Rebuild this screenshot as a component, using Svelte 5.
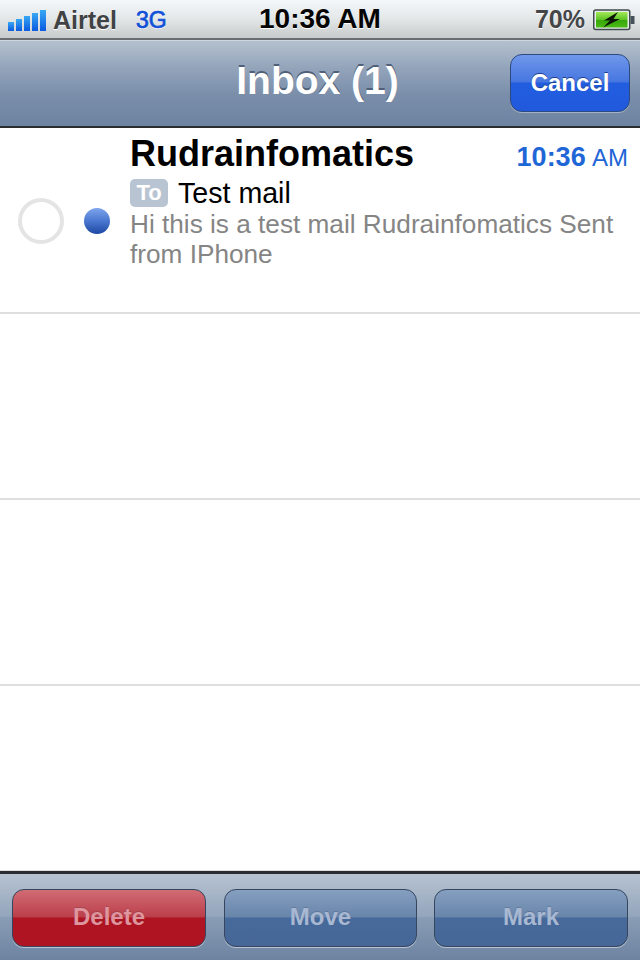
<script>
	const rows = [1, 2, 3, 4];
	const signal = [9, 12, 15, 18, 21];
</script>

<div class="phone">
	<div class="status">
		<div class="left">
			<div class="bars">
				{#each signal as h}
					<span style="height: {h}px"></span>
				{/each}
			</div>
			<span class="carrier">Airtel</span>
			<span class="net">3G</span>
		</div>
		<span class="clock">10:36 AM</span>
		<div class="right">
			<span class="pct">70%</span>
			<svg class="battery" width="42" height="22" viewBox="0 0 42 22">
				<defs>
					<linearGradient id="charge" x1="0" y1="0" x2="0" y2="1">
						<stop offset="0" stop-color="#a2e85a" />
						<stop offset="0.5" stop-color="#5cc422" />
						<stop offset="0.55" stop-color="#38a80c" />
						<stop offset="1" stop-color="#4aba14" />
					</linearGradient>
				</defs>
				<rect x="0.75" y="1" width="36" height="19.5" rx="2" fill="#e8ecec" stroke="#3f4a4c" stroke-width="1.5" />
				<rect x="3" y="3" width="31.5" height="15.5" fill="url(#charge)" />
				<rect x="37.5" y="7" width="4" height="8" fill="#46525a" />
				<path d="M25 3 L11 11.5 L17 11.5 L10 18.5 L27 10 L20.5 10 L25 3 Z" fill="#0c1405" />
			</svg>
		</div>
	</div>

	<header class="nav">
		<h1>Inbox (1)</h1>
		<button class="cancel">Cancel</button>
	</header>

	<main class="list">
		<article class="row mail">
			<span class="check"></span>
			<span class="dot"></span>
			<div class="body">
				<div class="top">
					<strong>Rudrainfomatics</strong>
					<time><b>10:36</b> AM</time>
				</div>
				<div class="subject"><span class="to">To</span>Test mail</div>
				<p>Hi this is a test mail Rudrainfomatics Sent from IPhone</p>
			</div>
		</article>
		{#each rows.slice(1) as r (r)}
			<div class="row"></div>
		{/each}
	</main>

	<footer class="toolbar">
		<button class="act delete">Delete</button>
		<button class="act move">Move</button>
		<button class="act mark">Mark</button>
	</footer>
</div>

<style>
	:global(body) {
		margin: 0;
		background: #fff;
	}

	.phone {
		width: 640px;
		height: 960px;
		display: flex;
		flex-direction: column;
		overflow: hidden;
		font-family: "Liberation Sans", Arial, sans-serif;
	}

	.status {
		height: 40px;
		flex: none;
		position: relative;
		display: flex;
		align-items: center;
		justify-content: space-between;
		padding: 0 0 0 8px;
		box-sizing: border-box;
		background: linear-gradient(#f3f7f9, #e6e9ea 45%, #c8cbcc);
		border-bottom: 2px solid #6a6e72;
	}

	.left {
		display: flex;
		align-items: center;
		padding-top: 2px;
	}

	.bars {
		display: flex;
		align-items: flex-end;
		gap: 2px;
		height: 22px;
		margin-top: -1px;
	}

	.bars span {
		width: 6px;
		background: linear-gradient(#38a8f4, #0a5ae0);
	}

	.carrier {
		font-size: 25px;
		font-weight: 700;
		color: #404244;
		margin-left: 7px;
		text-shadow: 0 1px 0 #fff;
	}

	.net {
		font-size: 23px;
		font-weight: 400;
		color: #1050d8;
		margin-left: 19px;
		-webkit-text-stroke: 0.7px #1050d8;
		text-shadow: 0 1px 0 #fff;
	}

	.clock {
		position: absolute;
		left: 259px;
		top: 3px;
		font-size: 28px;
		font-weight: 700;
		color: #050505;
		text-shadow: 0 1px 0 #fff;
	}

	.right {
		display: flex;
		align-items: center;
		gap: 8px;
		padding-right: 5px;
		padding-top: 1px;
	}

	.pct {
		font-size: 25px;
		font-weight: 700;
		color: #444648;
		text-shadow: 0 1px 0 #fff;
	}

	.battery {
		display: block;
	}

	.nav {
		height: 88px;
		flex: none;
		box-sizing: border-box;
		position: relative;
		display: flex;
		align-items: center;
		justify-content: flex-end;
		padding: 0 10px 2px 0;
		background: linear-gradient(#b4c0ce, #93a4ba 32%, #7b8fab 62%, #6d83a1);
		border-top: 1px solid #cdd5de;
		border-bottom: 2px solid #2a2d30;
	}

	h1 {
		position: absolute;
		left: 0;
		right: 5px;
		top: 17px;
		margin: 0;
		text-align: center;
		font-size: 39px;
		line-height: 46px;
		font-weight: 700;
		color: #fff;
		text-shadow: 0 -2px 0 #4f6078;
	}

	button {
		font-family: inherit;
		font-weight: 700;
		padding: 0;
		box-sizing: border-box;
	}

	.cancel {
		width: 120px;
		height: 58px;
		border-radius: 12px;
		border: 1px solid #2c4a7e;
		background: linear-gradient(#7097ea, #4676e0 48%, #225de0 50%, #2159dc);
		color: #fff;
		font-size: 24px;
		text-shadow: 0 -1px 0 #1c3f8f;
		box-shadow: 0 1px 0 #a5b2c4;
	}

	.list {
		flex: 1;
		background: #fff;
		min-height: 0;
	}

	.row {
		height: 186px;
		box-sizing: border-box;
		border-bottom: 2px solid #dedede;
	}

	.mail {
		display: flex;
		align-items: flex-start;
		position: relative;
	}

	.check {
		position: absolute;
		left: 18px;
		top: 70px;
		width: 46px;
		height: 46px;
		box-sizing: border-box;
		border: 4px solid #e4e4e4;
		border-radius: 50%;
	}

	.dot {
		position: absolute;
		left: 84px;
		top: 80px;
		width: 26px;
		height: 26px;
		border-radius: 50%;
		background: linear-gradient(#7ea4ec, #4a78d0 50%, #1e48a4);
	}

	.body {
		flex: 1;
		padding: 5px 12px 0 130px;
		min-width: 0;
	}

	.top {
		display: flex;
		justify-content: space-between;
		align-items: baseline;
	}

	strong {
		font-size: 36px;
		line-height: 41px;
		color: #000;
		font-weight: 700;
	}

	time {
		font-size: 24px;
		color: #1f66d6;
	}

	time b {
		font-size: 27px;
		margin-right: 1px;
	}

	.subject {
		display: flex;
		align-items: center;
		font-size: 28.6px;
		line-height: 32px;
		color: #000;
		margin-top: 3px;
	}

	.to {
		width: 38px;
		height: 28px;
		margin-right: 10px;
		border-radius: 5px;
		background: #b9c4d2;
		color: #fff;
		font-size: 22px;
		font-weight: 700;
		line-height: 28px;
		text-align: center;
	}

	p {
		margin: 0;
		font-size: 26.2px;
		line-height: 30px;
		color: #858585;
	}

	.toolbar {
		flex: none;
		height: 89px;
		box-sizing: border-box;
		display: flex;
		gap: 17px;
		padding: 15px 12px 0;
		background: linear-gradient(#b6c2d0, #93a5bc 50%, #8a9db6 50%, #6d83a1);
		border-top: 3px solid #2a2d30;
	}

	.act {
		height: 58px;
		padding-bottom: 2px;
		border-radius: 12px;
		border: 1px solid #35465e;
		font-size: 24px;
		box-shadow: 0 1px 0 #b9c4d2;
		text-shadow: 0 -1px 0 rgba(30, 40, 60, 0.2);
	}

	.delete {
		width: 194px;
		background: linear-gradient(#d16c75, #bb3f4a 48%, #ae1421 50%, #ae1421);
		color: #df959d;
	}

	.move {
		width: 193px;
		margin-left: 1px;
		background: linear-gradient(#859fc0, #6885aa 48%, #466a9b 50%, #466798);
		color: #a8b8d2;
	}

	.mark {
		width: 194px;
		background: linear-gradient(#859fc0, #6885aa 48%, #466a9b 50%, #466798);
		color: #a8b8d2;
	}
</style>
